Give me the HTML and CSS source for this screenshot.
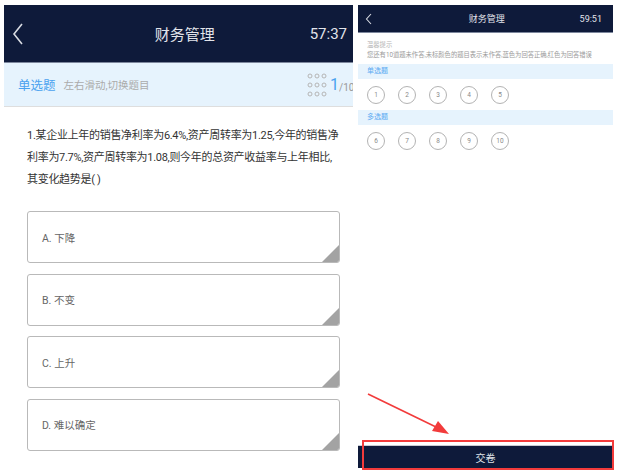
FILE: index.html
```html
<!DOCTYPE html>
<html>
<head>
	<meta charset="UTF-8">
	<title>财务管理</title>
	<link rel="stylesheet" href="styles.css">
</head>
<body>
	<div class="page">
		<div class="exam">
			<div class="hd">
				<svg class="back" width="12" height="22" viewBox="0 0 12 22"><path d="M10 1 L2 11 L10 21" fill="none" stroke="#d8dbe2" stroke-width="1.6"/></svg>
				<div class="title">财务管理</div>
				<div class="time">57:37</div>
			</div>
			<div class="band">
				<span class="type">单选题</span>
				<span class="tip">左右滑动,切换题目</span>
				<svg class="grid" width="20" height="24" viewBox="0 0 20 24">
					<g fill="none" stroke="#b5b5b5" stroke-width="1">
						<circle cx="3" cy="3" r="2"/><circle cx="10" cy="3" r="2"/><circle cx="17" cy="3" r="2"/>
						<circle cx="3" cy="12" r="2"/><circle cx="10" cy="12" r="2"/><circle cx="17" cy="12" r="2"/>
						<circle cx="3" cy="21" r="2"/><circle cx="10" cy="21" r="2"/><circle cx="17" cy="21" r="2"/>
					</g>
				</svg>
				<span class="num">1</span><span class="total">/10</span>
			</div>
			<div class="question">1.某企业上年的销售净利率为6.4%,资产周转率为1.25,今年的销售净利率为7.7%,资产周转率为1.08,则今年的总资产收益率与上年相比,<span class="nw">其变化趋势是( )</span></div>
			<div class="options">
				<div class="opt">A. 下降</div>
				<div class="opt">B. 不变</div>
				<div class="opt">C. 上升</div>
				<div class="opt">D. 难以确定</div>
			</div>
		</div>

		<div class="card">
			<div class="hd2">
				<svg class="back2" width="7" height="12" viewBox="0 0 7 12"><path d="M6 1 L1.5 6 L6 11" fill="none" stroke="#d8dbe2" stroke-width="1.1"/></svg>
				<div class="title2">财务管理</div>
				<div class="time2">59:51</div>
			</div>
			<div class="hint">
				<div>温馨提示</div>
				<div>您还有10道题未作答,未标颜色的题目表示未作答,蓝色为回答正确,红色为回答错误</div>
			</div>
			<div class="sec">单选题</div>
			<div class="nums">
				<span>1</span><span>2</span><span>3</span><span>4</span><span>5</span>
			</div>
			<div class="sec">多选题</div>
			<div class="nums">
				<span>6</span><span>7</span><span>8</span><span>9</span><span>10</span>
			</div>
			<div class="submit">交卷</div>
		</div>
	</div>

	<!-- 标注 -->
	<div class="mark"></div>
	<svg class="arrow" width="90" height="50" viewBox="0 0 90 50">
		<path d="M6 4 L74 37" stroke="#f23b3b" stroke-width="1.6" fill="none"/>
		<path d="M87 44 L70 41 L76 31 Z" fill="#f23b3b"/>
	</svg>
</body>
</html>
```

FILE: styles.css
```css
*{
	padding: 0;
	margin: 0;
	box-sizing: border-box;
}
body{
	background: #fff;
	font-family: Roboto, "Noto Sans CJK SC", sans-serif;
	width: 619px;
	height: 474px;
	overflow: hidden;
	position: relative;
}
.page{
	display: flex;
	gap: 5px;
	padding: 5px 0 0 4px;
	height: 474px;
}

/* 左边 答题页 */
.exam{
	width: 349px;
	height: 469px;
	overflow: hidden;
}
.hd{
	height: 58px;
	background: #0e1a3a;
	border-bottom: 1px solid #7d879d;
	display: flex;
	align-items: center;
	padding: 0 6px 0 8px;
	color: #e2e4ea;
}
.back{
	display: block;
}
.title{
	flex: 1;
	text-align: center;
	font-size: 15px;
	padding-left: 36px;
}
.time{
	font-size: 15px;
}
.band{
	height: 44px;
	background: #e6f3fd;
	border-bottom: 1px solid #dedede;
	display: flex;
	align-items: center;
	padding-left: 14px;
	white-space: nowrap;
}
.type{
	color: #4aa2ef;
	font-size: 12.5px;
}
.tip{
	color: #ababab;
	font-size: 10.5px;
	margin-left: 8px;
	flex: 1;
}
.grid{
	display: block;
	margin-right: 3px;
}
.num{
	color: #4aa2ef;
	font-size: 16px;
}
.total{
	color: #999;
	font-size: 10px;
	margin-top: 5px;
	width: 14px;
	overflow: hidden;
}
.question{
	padding: 18px 10px 0 23px;
	font-size: 11px;
	letter-spacing: -0.3px;
	line-height: 22px;
	color: #333;
}
.nw{
	white-space: nowrap;
}
.options{
	display: flex;
	flex-direction: column;
	gap: 10.5px;
	margin: 20px 13px 0 23px;
}
.opt{
	height: 52px;
	border: 1px solid #b9b9b9;
	border-radius: 3px;
	display: flex;
	align-items: center;
	padding-left: 14px;
	font-size: 10.5px;
	color: #666;
	position: relative;
	overflow: hidden;
}
.opt:after{
	content: "";
	position: absolute;
	right: 0;
	bottom: 0;
	border-style: solid;
	border-width: 0 0 17px 17px;
	border-color: transparent transparent #a3a3a3 transparent;
}

/* 右边 答题卡 */
.card{
	width: 255px;
	height: 463px;
	display: flex;
	flex-direction: column;
	background: #fff;
}
.hd2{
	height: 28px;
	background: #0e1a3a;
	border-bottom: 1px solid #7d879d;
	display: flex;
	align-items: center;
	padding: 0 11px 0 7px;
	color: #e2e4ea;
}
.back2{
	display: block;
}
.title2{
	flex: 1;
	text-align: center;
	font-size: 9px;
	padding-left: 22px;
}
.time2{
	font-size: 9px;
}
.hint{
	padding: 7px 0 0 9px;
	margin-bottom: 4px;
	font-size: 6.3px;
	line-height: 10px;
	color: #9a9a9a;
	white-space: nowrap;
}
.hint div:first-child{
	color: #b5b5b5;
}
.sec{
	height: 15px;
	background: #e6f3fd;
	color: #5aaaf2;
	font-size: 7px;
	line-height: 15px;
	padding-left: 9px;
}
.nums{
	display: flex;
	gap: 13px;
	padding-left: 9px;
	margin: 7px 0 6px;
}
.nums span{
	width: 18px;
	height: 18px;
	border: 1px solid #b3b3b3;
	border-radius: 50%;
	font-size: 6.5px;
	color: #888;
	display: flex;
	align-items: center;
	justify-content: center;
}
.submit{
	margin-top: auto;
	height: 23px;
	background: #0e1a3a;
	border-top: 1px solid #c9ccd4;
	color: #dfe2e8;
	font-size: 10px;
	display: flex;
	align-items: center;
	justify-content: center;
}

/* 红色标注 */
.mark{
	position: absolute;
	left: 362px;
	top: 440px;
	width: 252px;
	height: 30px;
	border: 2px solid #f23b3b;
}
.arrow{
	position: absolute;
	left: 362px;
	top: 390px;
}
```
